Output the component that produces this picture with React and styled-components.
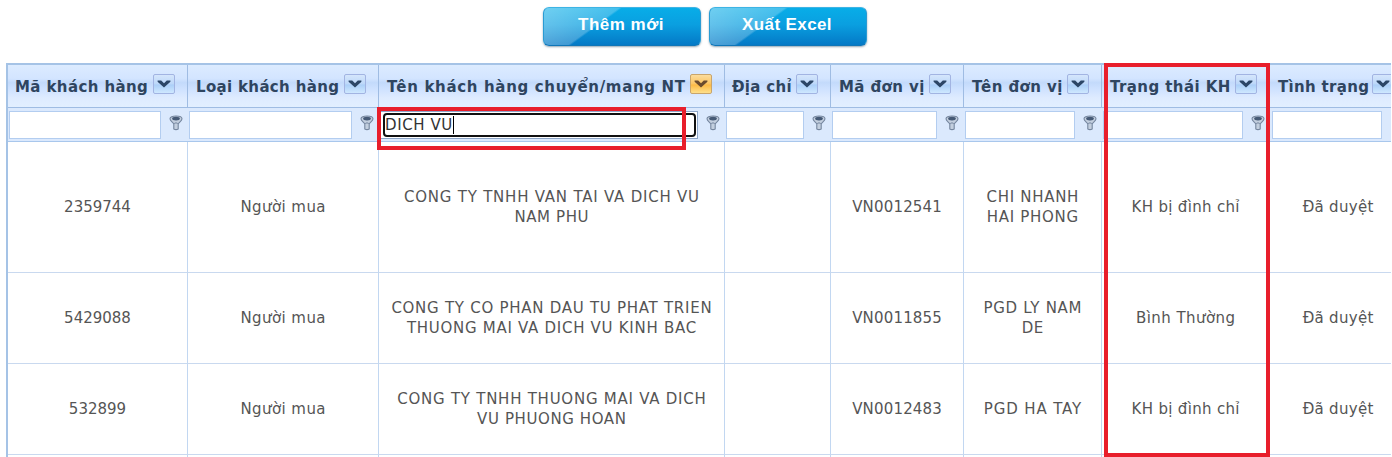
import React from "react";
import styled, { createGlobalStyle } from "styled-components";

const Global = createGlobalStyle`
  * { box-sizing: border-box; }
  body { margin: 0; background: #fff; overflow: hidden; }
`;

const Page = styled.main`
  position: relative;
  width: 1392px;
  height: 457px;
  overflow: hidden;
  background: #fff;
  font: 15px/20px "DejaVu Sans", Verdana, sans-serif;
`;

const Toolbar = styled.div`
  display: flex;
  gap: 8px;
  padding: 7px 0 0 543px;
  height: 63px;
`;

const ActionButton = styled.button`
  width: 158px;
  height: 39px;
  padding: 0 2px 3px 0;
  border: 1px solid #2a9bd3;
  border-top-color: #3db4e4;
  border-bottom-color: #0f76b8;
  border-radius: 6px;
  color: #fff;
  font: bold 17px/20px "Liberation Sans", Arial, sans-serif;
  letter-spacing: ${(p) => p.$spacing}px;
  background:
    linear-gradient(144deg, rgba(255, 255, 255, 0.42) 0, rgba(255, 255, 255, 0.24) 44px, transparent 46px),
    linear-gradient(#08ade8, #0a9fe0 45%, #0479c6);
  box-shadow: 0 1px 2px rgba(40, 80, 110, 0.5);
`;

const Viewport = styled.div`
  width: 1385px;
  height: 394px;
  margin-left: 6px;
  overflow: hidden;
`;

const Grid = styled.div`
  width: 1401px;
  border: 2px solid #a5c3e6;
  border-right: 0;
`;

const Row = styled.div`
  display: grid;
  grid-template-columns: 180px 191px 346px 106px 133px 138px 168px 137px;
  height: ${(p) => p.$height}px;
`;

const HeadCell = styled.div`
  display: flex;
  align-items: center;
  padding: 2px 12px 0 ${(p) => p.$inset}px;
  border-right: 1px solid #9fbce3;
  border-bottom: 1px solid #9fbce3;
  background: linear-gradient(#dcebff 0, #d3e5ff 32%, #c3dafb 42%, #cfe2ff 58%, #deebff 78%, #e2efff 100%);
  color: #2f4560;
  font-weight: bold;
  white-space: nowrap;
  letter-spacing: ${(p) => p.$spacing}px;
`;

const MenuButton = styled.button`
  display: grid;
  place-items: center;
  flex: none;
  width: 22px;
  height: 20px;
  margin: -6px 0 0 auto;
  padding: 0;
  border: 1px solid ${(p) => (p.$active ? "#c9a56b" : "#a2b4e2")};
  border-radius: 2px;
  background: ${(p) =>
    p.$active
      ? "linear-gradient(#fbdc9c, #fbc463 50%, #fcb944 55%, #fee08c)"
      : "linear-gradient(#d5e6fc, #bcd7f9 50%, #abcff8 55%, #cfe8ff)"};
  color: ${(p) => (p.$active ? "#6b4b2e" : "#2c4666")};
`;

const FilterCell = styled.div`
  display: flex;
  align-items: flex-start;
  gap: 8px;
  padding: 3px ${(p) => (p.$last ? 25 : 5)}px 0 ${(p) => (p.$last ? 2 : 1)}px;
  border-bottom: 1px solid #a9c7ec;
  background: #dbe9fd;
`;

const Field = styled.div`
  flex: 1;
  height: 28px;
  border: 1px solid #b3cdf0;
  background: #fff;
  color: #333;
`;

const ActiveField = styled(Field)`
  padding: 1px 1px 2px 0;
  border-color: #8ea6c8;
`;

const FocusRing = styled.div`
  display: flex;
  align-items: center;
  height: 24px;
  margin-left: 2px;
  border: 2px solid #101010;
  border-radius: 4px;
  letter-spacing: 0.6px;
`;

const Caret = styled.i`
  width: 1px;
  height: 18px;
  background: #000;
`;

const FilterIcon = styled.svg`
  flex: none;
  width: 14px;
  height: 16px;
  margin-top: 4px;
`;

const Cell = styled.div`
  display: flex;
  flex-direction: column;
  align-items: center;
  justify-content: center;
  padding-top: 2px;
  border-right: 1px solid #c2d7f1;
  border-bottom: 1px solid #c9d9ef;
  color: #555;
  white-space: nowrap;
  line-height: 19.6px;
`;

const Line = styled.span`
  letter-spacing: ${(p) => p.$spacing}px;
  margin-right: -${(p) => p.$spacing}px;
`;

const Highlight = styled.div`
  position: absolute;
  left: ${(p) => p.$x}px;
  top: ${(p) => p.$y}px;
  width: ${(p) => p.$w}px;
  height: ${(p) => p.$h}px;
  border: 4px solid #e81e2b;
  pointer-events: none;
`;

const columns = [
  { label: "Mã khách hàng", spacing: 0.4, inset: 7 },
  { label: "Loại khách hàng", spacing: 0.34, inset: 8 },
  { label: "Tên khách hàng chuyển/mang NT", spacing: 0.67, inset: 8, active: true },
  { label: "Địa chỉ", spacing: 0.3, inset: 7 },
  { label: "Mã đơn vị", spacing: 0.4, inset: 8 },
  { label: "Tên đơn vị", spacing: 0.42, inset: 8 },
  { label: "Trạng thái KH", spacing: 0.42, inset: 8 },
  { label: "Tình trạng", spacing: 0.32, inset: 8, last: true },
];

const buyer = [["Người mua", 0.42]];
const approved = [["Đã duyệt", 0.3]];
const suspended = [["KH bị đình chỉ", 0.32]];

const records = [
  {
    height: 131,
    cells: [
      [["2359744", 0]],
      buyer,
      [["CONG TY TNHH VAN TAI VA DICH VU", 0.78], ["NAM PHU", 0.6]],
      [],
      [["VN0012541", 0.18]],
      [["CHI NHANH", 0.7], ["HAI PHONG", 0.7]],
      suspended,
      approved,
    ],
  },
  {
    height: 91,
    cells: [
      [["5429088", 0]],
      buyer,
      [["CONG TY CO PHAN DAU TU PHAT TRIEN", 0.73], ["THUONG MAI VA DICH VU KINH BAC", 0.72]],
      [],
      [["VN0011855", 0.18]],
      [["PGD LY NAM", 0.7], ["DE", 0.5]],
      [["Bình Thường", 0.45]],
      approved,
    ],
  },
  {
    height: 91,
    cells: [
      [["532899", 0]],
      buyer,
      [["CONG TY TNHH THUONG MAI VA DICH", 0.75], ["VU PHUONG HOAN", 0.6]],
      [],
      [["VN0012483", 0.18]],
      [["PGD HA TAY", 0.88]],
      suspended,
      approved,
    ],
  },
  { height: 91, cells: [[], [], [], [], [], [], [], []] },
];

const Chevron = () => (
  <svg width="14" height="10" viewBox="0 0 14 10">
    <path d="M.6 1.500h3.600L7 4.200l2.800-2.700h3.600v1.200L7 8.600.6 2.700z" fill="currentColor" />
  </svg>
);

const Funnel = () => (
  <FilterIcon viewBox="0 0 14 16">
    <path
      d="M1 3.800C1 2.200 3.600 1 7 1s6 1.200 6 2.800c0 2.200-3.300 3.700-3.800 5.200v5q-2.200 1.200-4.400 0V9C4.300 7.500 1 6 1 3.800z"
      fill="#c3cfdf"
      stroke="#75869f"
      strokeWidth="1.100"
    />
    <ellipse cx="7" cy="3.600" rx="3.900" ry="1.900" fill="#465a76" />
    <path d="M5.200 8.500q1.800-1.400 3.600 0" stroke="#75869f" strokeWidth="1" fill="none" />
  </FilterIcon>
);

export default function App() {
  return (
    <Page>
      <Global />
      <Toolbar>
        <ActionButton $spacing={0.5}>Thêm mới</ActionButton>
        <ActionButton $spacing={0.4}>Xuất Excel</ActionButton>
      </Toolbar>
      <Viewport>
        <Grid>
          <Row $height={43}>
            {columns.map((c) => (
              <HeadCell key={c.label} $inset={c.inset} $spacing={c.spacing}>
                {c.label}
                <MenuButton $active={c.active}><Chevron /></MenuButton>
              </HeadCell>
            ))}
          </Row>
          <Row $height={34}>
            {columns.map((c) => (
              <FilterCell key={c.label} $last={c.last}>
                {c.active ? (
                  <ActiveField><FocusRing>DICH VU<Caret /></FocusRing></ActiveField>
                ) : (
                  <Field />
                )}
                {!c.last && <Funnel />}
              </FilterCell>
            ))}
          </Row>
          {records.map((r, i) => (
            <Row key={i} $height={r.height}>
              {r.cells.map((lines, j) => (
                <Cell key={j}>
                  {lines.map(([text, spacing]) => (
                    <Line key={text} $spacing={spacing}>{text}</Line>
                  ))}
                </Cell>
              ))}
            </Row>
          ))}
        </Grid>
      </Viewport>
      <Highlight $x={377} $y={107} $w={309} $h={43} />
      <Highlight $x={1104} $y={63} $w={166} $h={394} />
    </Page>
  );
}
